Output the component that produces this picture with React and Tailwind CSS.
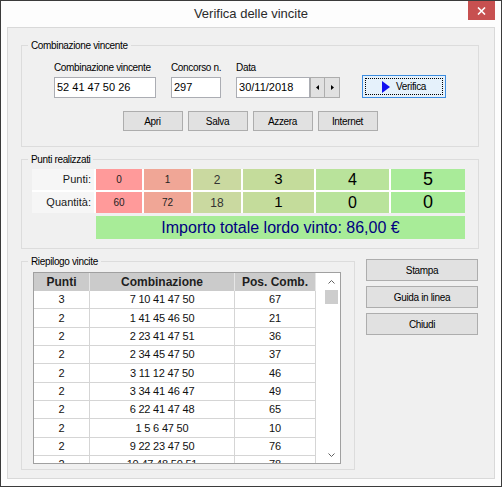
import React from "react";

const narrow = "font-['Liberation_Sans',Arial,sans-serif] text-[10px] tracking-[-0.35px]";
const sans = "font-['Liberation_Sans',Arial,sans-serif]";
const btn =
  "bg-[#e1e1e1] border border-[#adadad] flex items-center justify-center text-black";

const rows = [
  ["3", "7 10 41 47 50", "67"],
  ["2", "1 41 45 46 50", "21"],
  ["2", "2 23 41 47 51", "36"],
  ["2", "2 34 45 47 50", "37"],
  ["2", "3 11 12 47 50", "46"],
  ["2", "3 34 41 46 47", "49"],
  ["2", "6 22 41 47 48", "65"],
  ["2", "1 5 6 47 50", "10"],
  ["2", "9 22 23 47 50", "76"],
  ["2", "10 47 48 50 51", "78"],
];

const GroupBox = ({ title, className, children }) => (
  <fieldset className={`border border-[#dcdcdc] ${className}`}>
    <legend className={`ml-[6px] px-[3px] leading-[13px] text-black ${narrow}`}>
      {title}
    </legend>
    {children}
  </fieldset>
);

const Chevron = ({ up }) => (
  <svg width="7" height="4" viewBox="0 0 7 4">
    <polyline
      points={up ? "0.5,3.5 3.5,0.5 6.5,3.5" : "0.5,0.5 3.5,3.5 6.5,0.5"}
      fill="none"
      stroke="#606060"
      strokeWidth="1"
    />
  </svg>
);

const App = () => {
  return (
    <div className={`w-[502px] h-[487px] border border-[#3b3b3b] bg-[#fdfdfd] flex flex-col ${sans}`}>
      {/* title bar */}
      <div className="h-[26px] flex items-start shrink-0">
        <div className="w-[33px]" />
        <div className="flex-1 h-full flex items-center justify-center text-[13px] text-[#2b2b2b]">
          Verifica delle vincite
        </div>
        <div className="w-[27px] h-[19px] bg-[#c75050] flex items-center justify-center">
          <svg width="9" height="8" viewBox="0 0 9 8">
            <path d="M1 0.5 L8 7.5 M8 0.5 L1 7.5" stroke="white" strokeWidth="1.6" />
          </svg>
        </div>
        <div className="w-[6px]" />
      </div>

      {/* client area */}
      <div className="mx-[6px] mb-[7px] flex-1 border border-[#d9d9d9] bg-[#f0f0f0] px-[13px] pt-[11px]">
        <GroupBox title="Combinazione vincente" className="w-[458px] h-[108px]">
          <div className={`pl-[32px] pt-[9px] flex items-end ${narrow}`}>
            <div className="flex flex-col">
              <div className="leading-[13px] mb-[3px]">Combinazione vincente</div>
              <div className={`w-[102px] h-[21px] border border-[#abadb3] bg-white pl-[2px] flex items-center text-[11px] tracking-normal ${sans}`}>
                52 41 47 50 26
              </div>
            </div>
            <div className="flex flex-col ml-[15px]">
              <div className="leading-[13px] mb-[3px]">Concorso n.</div>
              <div className={`w-[50px] h-[21px] border border-[#abadb3] bg-white pl-[2px] flex items-center text-[11px] tracking-normal ${sans}`}>
                297
              </div>
            </div>
            <div className="flex flex-col ml-[15px]">
              <div className="leading-[13px] mb-[3px]">Data</div>
              <div className="flex">
                <div className={`w-[74px] h-[21px] border border-[#abadb3] bg-white pl-[2px] flex items-center text-[11px] tracking-normal ${sans}`}>
                  30/11/2018
                </div>
                <div className="w-[15px] h-[21px] bg-[#e1e1e1] border border-[#adadad] flex items-center justify-center">
                  <svg width="3" height="5" viewBox="0 0 3 5">
                    <polygon points="3,0 0,2.5 3,5" fill="#000" />
                  </svg>
                </div>
                <div className="w-[15px] h-[21px] bg-[#e1e1e1] border border-l-0 border-[#adadad] flex items-center justify-center">
                  <svg width="3" height="5" viewBox="0 0 3 5">
                    <polygon points="0,0 3,2.5 0,5" fill="#000" />
                  </svg>
                </div>
              </div>
            </div>
            <div className="ml-[22px] w-[84px] h-[23px] border border-[#3c8ce0] bg-[#e5f1fb] p-[2px]">
              <div className="w-full h-full border border-dotted border-black flex items-center justify-center gap-[6px]">
                <svg width="8" height="12" viewBox="0 0 8 12">
                  <polygon points="0,0 8,6 0,12" fill="#1010f0" />
                </svg>
                <span>Verifica</span>
              </div>
            </div>
          </div>
          <div className={`mt-[13px] flex justify-center gap-[5px] ${narrow}`}>
            <div className={`${btn} w-[60px] h-[20px]`}>Apri</div>
            <div className={`${btn} w-[60px] h-[20px]`}>Salva</div>
            <div className={`${btn} w-[60px] h-[20px]`}>Azzera</div>
            <div className={`${btn} w-[60px] h-[20px]`}>Internet</div>
          </div>
        </GroupBox>

        <GroupBox title="Punti realizzati" className="w-[458px] h-[96px] mt-[6px]">
          <div className="pl-[10px] pt-[3px]">
            <div className="grid grid-cols-[62px_46px_47px_48px_71px_73px_74px] grid-rows-[21px_21px] gap-[2px] bg-white w-[433px]">
              <div className="bg-[#f6f6f6] flex items-center justify-end pr-[3px] text-[11px] text-[#1a1a1a]">Punti:</div>
              <div className="bg-[#ff9a9a] flex items-center justify-center text-[10px] text-[#222]">0</div>
              <div className="bg-[#f0a696] flex items-center justify-center text-[10px] text-[#222]">1</div>
              <div className="bg-[#cad9a0] flex items-center justify-center text-[12px] text-[#333]">2</div>
              <div className="bg-[#c4dc9b] flex items-center justify-center text-[15px] text-black">3</div>
              <div className="bg-[#b9e39b] flex items-center justify-center text-[16px] text-black">4</div>
              <div className="bg-[#a9eb99] flex items-center justify-center text-[18px] text-black">5</div>
              <div className="bg-[#f6f6f6] flex items-center justify-end pr-[3px] text-[11px] text-[#1a1a1a]">Quantità:</div>
              <div className="bg-[#ff9a9a] flex items-center justify-center text-[10px] text-[#222]">60</div>
              <div className="bg-[#f0a696] flex items-center justify-center text-[10px] text-[#222]">72</div>
              <div className="bg-[#cad9a0] flex items-center justify-center text-[12px] text-[#333]">18</div>
              <div className="bg-[#c4dc9b] flex items-center justify-center text-[15px] text-black">1</div>
              <div className="bg-[#b9e39b] flex items-center justify-center text-[16px] text-black">0</div>
              <div className="bg-[#a9eb99] flex items-center justify-center text-[18px] text-black">0</div>
            </div>
            <div className="ml-[64px] mt-[3px] w-[369px] h-[23px] bg-[#a8ec98] flex items-center justify-center text-[16px] text-[#000080]">
              Importo totale lordo vinto: 86,00 €
            </div>
          </div>
        </GroupBox>

        <div className="mt-[6px] flex items-start">
          <GroupBox title="Riepilogo vincite" className="w-[334px] h-[215px]">
            <div className="pl-[11px] pt-[4px]">
              <div className="w-[308px] h-[192px] border border-[#a0a0a0] bg-white flex overflow-hidden">
                <div className="w-[282px] flex flex-col">
                  <div className="flex h-[18px] shrink-0 bg-[#cbcbcb] font-bold text-[12px] text-[#1e1e1e]">
                    <div className="w-[56px] border-r border-[#e6e6e6] flex items-center justify-center">Punti</div>
                    <div className="w-[145px] border-r border-[#e6e6e6] flex items-center justify-center">Combinazione</div>
                    <div className="w-[81px] border-r border-[#e6e6e6] flex items-center justify-center">Pos. Comb.</div>
                  </div>
                  {rows.map((r, i) => (
                    <div key={i} className="flex h-[18.33px] shrink-0 border-b border-[#d5d5d5] text-[11px] tracking-[-0.2px] text-[#111]">
                      <div className="w-[56px] border-r border-[#d5d5d5] flex items-center justify-center">{r[0]}</div>
                      <div className="w-[145px] border-r border-[#d5d5d5] flex items-center justify-center">{r[1]}</div>
                      <div className="w-[81px] border-r border-[#d5d5d5] flex items-center justify-center">{r[2]}</div>
                    </div>
                  ))}
                </div>
                <div className="w-[7px]" />
                <div className="w-[17px] flex flex-col">
                  <div className="h-[17px] flex items-center justify-center">
                    <Chevron up />
                  </div>
                  <div className="ml-[2px] w-[13px] h-[14px] bg-[#cdcdcd]" />
                  <div className="flex-1" />
                  <div className="h-[17px] flex items-center justify-center">
                    <Chevron />
                  </div>
                </div>
              </div>
            </div>
          </GroupBox>
          <div className={`ml-[11px] mt-[4px] w-[112px] flex flex-col gap-[5px] ${narrow}`}>
            <div className={`${btn} h-[22px]`}>Stampa</div>
            <div className={`${btn} h-[22px]`}>Guida in linea</div>
            <div className={`${btn} h-[22px]`}>Chiudi</div>
          </div>
        </div>
      </div>
    </div>
  );
};

export default App;
